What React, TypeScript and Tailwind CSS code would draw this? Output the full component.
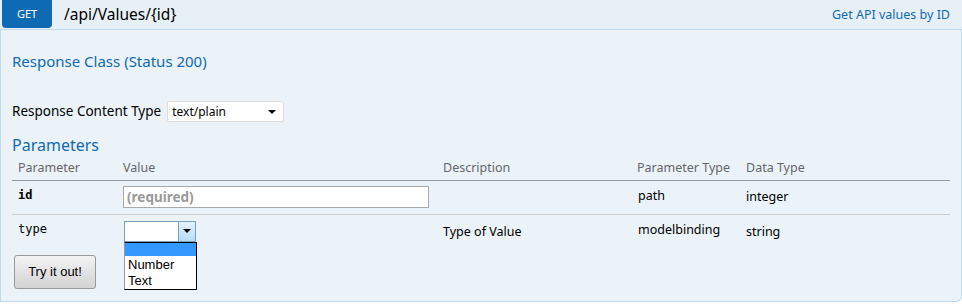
const font = { fontFamily: '"Noto Sans", "Open Sans", sans-serif' };
const mono = { fontFamily: '"DejaVu Sans Mono", monospace' };
const win = { fontFamily: '"Liberation Sans", Arial, sans-serif' };

const cols = "grid grid-cols-[106px_320px_194px_109px_1fr]";

function DropArrow() {
  return (
    <svg width="8" height="4" viewBox="0 0 8 4">
      <path d="M0 0h8L4 4z" fill="#000" />
    </svg>
  );
}

export default function App() {
  return (
    <div className="w-[962px] h-[304px] bg-white" style={font}>
      {/* heading bar */}
      <div className="flex h-[30px] items-start justify-between border-b border-[#c3d9ec] bg-[#e7f0f7] pl-[2px] pr-[12px]">
        <div className="flex items-center">
          <span className="flex h-[28px] w-[50px] items-center justify-center rounded-b-[4px] bg-[#0f6ab4] text-[11px] text-white">
            GET
          </span>
          <span className="ml-[12px] text-[15.5px] leading-[28px] text-black">/api/Values/{"{id}"}</span>
        </div>
        <span className="text-[12.5px] leading-[30px] text-[#0f6ab4]">Get API values by ID</span>
      </div>

      {/* content */}
      <div className="relative h-[272px] rounded-br-[6px] border-x border-b border-[#c3d9ec] bg-[#ebf3f9] px-[11px]">
        <h4 className="pt-[20px] text-[15px] leading-[22px] text-[#0f6ab4]">Response Class (Status 200)</h4>

        <div className="mt-[29px] flex items-center text-[13.5px] text-black">
          <span>Response Content Type</span>
          <div className="ml-[6px] flex h-[21px] w-[117px] items-center justify-between rounded-[2px] border border-[#ddd] bg-white pl-[4px] pr-[7px] text-[12px]">
            <span>text/plain</span>
            <DropArrow />
          </div>
        </div>

        <h4 className="mt-[12px] text-[16px] leading-[22px] text-[#0f6ab4]">Parameters</h4>

        <div className="w-[938px]">
          <div className={`${cols} border-b border-[#999] pt-[3px] text-[12.5px] text-[#666]`}>
            <div className="px-[6px] pb-[2px]">Parameter</div>
            <div className="px-[5px] pb-[2px]">Value</div>
            <div className="px-[5px] pb-[2px]">Description</div>
            <div className="px-[5px] pb-[2px]">Parameter Type</div>
            <div className="px-[5px] pb-[2px]">Data Type</div>
          </div>

          <div className={`${cols} h-[34px] items-start border-b border-[#ccc] text-[12.5px] text-black`}>
            <div className="px-[6px] pt-[5px] text-[12px] font-bold" style={mono}>
              id
            </div>
            <div className="pl-[5px] pt-[5px]">
              <div className="flex h-[22px] w-[306px] items-center border border-[#aaa] bg-white px-[3px] text-[13.5px] font-bold text-[#999]">
                (required)
              </div>
            </div>
            <div />
            <div className="px-[6px] pt-[6px]">path</div>
            <div className="px-[5px] pt-[7px]">integer</div>
          </div>

          <div className={`${cols} relative h-[34px] items-start text-[12.5px] text-black`}>
            <div className="px-[6px] pt-[5px] text-[12px]" style={mono}>
              type
            </div>
            <div className="relative pl-[6px] pt-[6px]">
              <div className="flex h-[21px] w-[72px] border border-[#7a9ebd] bg-white">
                <div className="flex-1" />
                <div className="flex w-[17px] items-center justify-center border-l border-[#7a9ebd] bg-gradient-to-b from-[#e3f2fc] to-[#b5dcf7]">
                  <DropArrow />
                </div>
              </div>
              <div
                className="absolute left-[6px] top-[27px] z-10 w-[73px] border border-black border-l-[#999] bg-white text-[13px] leading-[16px]"
                style={win}
              >
                <div className="h-[13px] bg-[#3399ff]" />
                <div className="px-[3px] pt-[1px]">Number</div>
                <div className="px-[3px]">Text</div>
              </div>
            </div>
            <div className="px-[5px] pt-[8px]">Type of Value</div>
            <div className="px-[6px] pt-[6px]">modelbinding</div>
            <div className="px-[5px] pt-[8px]">string</div>
          </div>
        </div>

        <button
          className="mt-[6px] ml-[2px] h-[34px] w-[82px] rounded-[3px] border border-[#999] bg-gradient-to-b from-[#f3f3f3] to-[#d3d3d3] text-[13px] text-black"
          style={win}
        >
          Try it out!
        </button>
      </div>
    </div>
  );
}
